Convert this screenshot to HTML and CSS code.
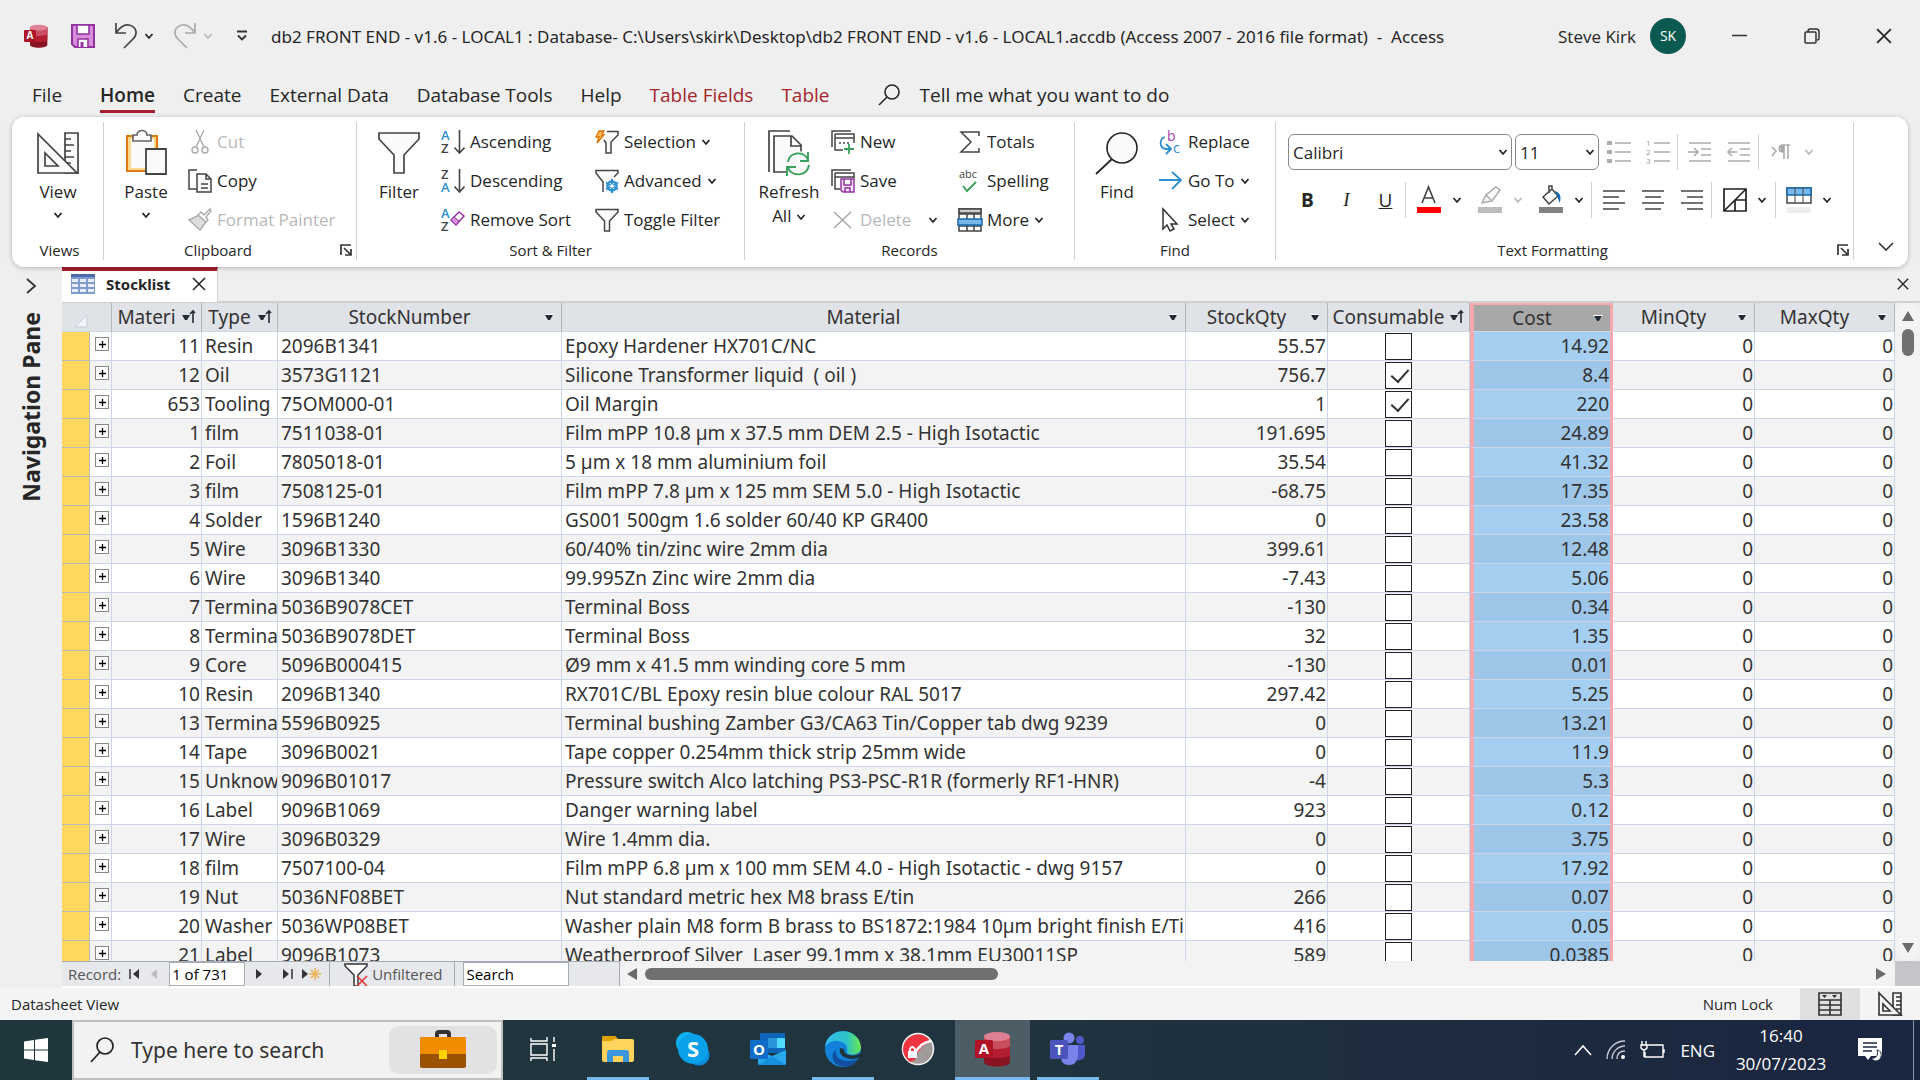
FILE: index.html
```html
<!DOCTYPE html>
<html lang="en">
<head>
  <meta charset="UTF-8" />
  <meta name="viewport" content="width=device-width, initial-scale=1.0" />
  <title>db2 FRONT END - Access</title>
  <link rel="stylesheet" href="styles.css">
</head>
<body>
  <!-- Shared icons -->
  <svg class="sprite" aria-hidden="true">
    <symbol id="chev" viewBox="0 0 10 10"><path d="M1.5 3 L5 7 L8.500 3" fill="none" stroke="currentColor" stroke-width="1.800"/></symbol>
    <symbol id="access" viewBox="0 0 36 36">
      <path d="M9 5 V31 C9 37 35 37 35 31 V5Z" fill="#881421"/>
      <path d="M9 5 V24 C12 28 32 28 35 24 V5Z" fill="#b31e30"/>
      <path d="M9 5 V15 C12 19 32 19 35 15 V5Z" fill="#c94f60"/>
      <ellipse cx="22" cy="5.500" rx="13" ry="4.500" fill="#e08095"/>
      <rect x="0" y="9" width="18" height="18" rx="1.500" fill="#b01226"/>
      <text x="9" y="23" text-anchor="middle" class="logo-letter">A</text>
    </symbol>
    <symbol id="az" viewBox="0 0 24 24">
      <path d="M18.500 0 V22 M13.500 17.500 L18.500 23 L23.500 17.500" fill="none" stroke="#444" stroke-width="1.600"/>
    </symbol>
    <symbol id="funnel" viewBox="0 0 24 24"><path d="M1 1.500 H23 V4 L14.500 13 V23 H9.500 V13 L1 4Z" fill="#fafafa" stroke="#444" stroke-width="1.500"/></symbol>
    <symbol id="design" viewBox="0 0 42 42">
      <path d="M28 1 H41 V41 H28Z M28 7 H34 M28 13 H37 M28 19 H34 M28 25 H37 M28 31 H34" fill="#fafafa" stroke="#444" stroke-width="1.700"/>
      <path d="M1 2 V41 H40Z M8 21 V34 H21Z" fill="#fafafa" stroke="#444" stroke-width="1.700"/>
    </symbol>
    <symbol id="launcher" viewBox="0 0 12 12"><path d="M1 11 V1 H11 M4 4 L10 10 M11 5 V11 H5" fill="none" stroke="#333" stroke-width="1.700"/></symbol>
    <symbol id="cross" viewBox="0 0 14 14"><path d="M1 1 L13 13 M13 1 L1 13" fill="none" stroke="currentColor" stroke-width="1.600"/></symbol>
    <symbol id="lens" viewBox="0 0 44 44"><circle cx="27" cy="17" r="15" fill="#fafafa" stroke="currentColor" stroke-width="1.600"/><path d="M17 28 L1 43" stroke="currentColor" stroke-width="1.800"/></symbol>
    <symbol id="lens-small" viewBox="0 0 22 22"><circle cx="14" cy="8" r="7" fill="none" stroke="currentColor" stroke-width="1.600"/><path d="M9 13 L1 21" stroke="currentColor" stroke-width="1.600"/></symbol>
  </svg>

  <header class="titlebar">
    <div class="quick">
      <svg width="24" height="24"><use href="#access"/></svg>
      <button aria-label="Save"><svg width="24" height="24" viewBox="0 0 24 24"><path d="M1 1 H23 V23 H4 L1 20Z" fill="#d88fdb" stroke="#9332a0" stroke-width="2"/><path d="M6 1 H18 V10 H6Z M7 23 V15 H17 V23" fill="#fff" stroke="#9332a0" stroke-width="1.600"/><path d="M11 18 V23" stroke="#9332a0" stroke-width="3"/></svg></button>
      <div class="split">
        <button aria-label="Undo"><svg width="24" height="26" viewBox="0 0 24 26"><path d="M2 0 V10 H12 M2 10 C6 4 10 1 15 2 C23 4 24 11 19 16 L10 25" fill="none" stroke="#444" stroke-width="1.700"/></svg></button>
        <svg class="chev"><use href="#chev"/></svg>
      </div>
      <div class="split off">
        <button aria-label="Redo"><svg width="24" height="26" viewBox="0 0 24 26"><path d="M22 0 V10 H12 M22 10 C18 4 14 1 9 2 C1 4 0 11 5 16 L14 25" fill="none" stroke="#aaa" stroke-width="1.700"/></svg></button>
        <svg class="chev"><use href="#chev"/></svg>
      </div>
      <button class="more" aria-label="Customize toolbar"><svg width="12" height="12" viewBox="0 0 12 12"><path d="M1 1.500 H11 M2 5.500 L6 9.500 L10 5.500" fill="none" stroke="#333" stroke-width="1.800"/></svg></button>
    </div>
    <h1>db2 FRONT END - v1.6 - LOCAL1 : Database- C:\Users\skirk\Desktop\db2 FRONT END - v1.6 - LOCAL1.accdb (Access 2007 - 2016 file format)&nbsp; -&nbsp; Access</h1>
    <div class="account"><span>Steve Kirk</span><span class="avatar">SK</span></div>
    <div class="winbtns">
      <button aria-label="Minimize"><svg width="16" height="16" viewBox="0 0 16 16"><path d="M0 7.500 H15" stroke="#333" stroke-width="1.500"/></svg></button>
      <button aria-label="Restore"><svg width="16" height="16" viewBox="0 0 16 16"><path d="M1 5 Q1 4 2 4 H11 Q12 4 12 5 V14 Q12 15 11 15 H2 Q1 15 1 14Z M4 3.500 Q4 1 6 1 H12 Q15 1 15 4 V10 Q15 12 13 12" fill="none" stroke="#333" stroke-width="1.500"/></svg></button>
      <button aria-label="Close"><svg width="16" height="16"><use href="#cross"/></svg></button>
    </div>
  </header>

  <nav class="tabs">
    <a href="#file">File</a>
    <a href="#home" class="active">Home</a>
    <a href="#create">Create</a>
    <a href="#external">External Data</a>
    <a href="#tools">Database Tools</a>
    <a href="#help">Help</a>
    <a href="#fields" class="context">Table Fields</a>
    <a href="#table" class="context">Table</a>
    <button class="tellme"><svg width="22" height="22"><use href="#lens-small"/></svg>Tell me what you want to do</button>
  </nav>

  <section class="ribbon">
    <div class="group g-views">
      <div class="tools">
        <button class="big"><svg width="42" height="42"><use href="#design"/></svg><span>View</span><svg class="chev"><use href="#chev"/></svg></button>
      </div>
      <div class="caption">Views</div>
    </div>

    <div class="group g-clip">
      <div class="tools">
        <button class="big"><svg width="42" height="46" viewBox="0 0 42 46"><path d="M2 6 H32 V41 H2Z" fill="#fbd98c" stroke="#e07a10" stroke-width="2"/><path d="M6 9 H29 V38 H6Z" fill="#fafafa"/><path d="M8 11 V5 H12 C12 -1 22 -1 22 5 H26 V11Z" fill="#fafafa" stroke="#666" stroke-width="1.700"/><path d="M21 19 H41 V44 H21Z" fill="#fafafa" stroke="#444" stroke-width="1.800"/></svg><span>Paste</span><svg class="chev"><use href="#chev"/></svg></button>
        <div class="stack">
          <button class="off"><svg width="24" height="24" viewBox="0 0 24 24"><path d="M8 0 L16 17 M16 0 L8 17" stroke="#aaa" stroke-width="1.400"/><circle cx="7" cy="20" r="3" fill="none" stroke="#aaa" stroke-width="1.400"/><circle cx="17" cy="20" r="3" fill="none" stroke="#aaa" stroke-width="1.400"/></svg>Cut</button>
          <button><svg width="24" height="24" viewBox="0 0 24 24"><path d="M9 1 H1 V20 H9" fill="none" stroke="#444" stroke-width="1.500"/><path d="M9 5 H18 L23 10 V23 H9Z M18 5 V10 H23 M13 15 H20 M13 19 H20" fill="#fafafa" stroke="#444" stroke-width="1.500"/></svg>Copy</button>
          <button class="off"><svg width="24" height="24" viewBox="0 0 24 24"><path d="M1 12 L11 7 L18 14 L12 22Z" fill="#ddd" stroke="#aaa" stroke-width="1.400"/><path d="M10 7 L13 4 L16 7 L22 1 L23 3 L18 9 L20 12 L18 14Z" fill="#fafafa" stroke="#aaa" stroke-width="1.400"/></svg>Format Painter</button>
        </div>
      </div>
      <div class="caption with-launch">Clipboard<button class="launch" aria-label="Clipboard options"><svg width="12" height="12"><use href="#launcher"/></svg></button></div>
    </div>

    <div class="group g-sort">
      <div class="tools">
        <button class="big"><svg width="42" height="42" viewBox="0 0 42 42"><path d="M1 1 H41 V7 L26 23 V41 H16 V23 L1 7Z" fill="#fafafa" stroke="#444" stroke-width="1.700"/></svg><span>Filter</span></button>
        <div class="stack">
          <button><svg width="24" height="24" class="azicon"><use href="#az"/><text x="0" y="10" class="blue">A</text><text x="0" y="23">Z</text></svg>Ascending</button>
          <button><svg width="24" height="24" class="azicon"><use href="#az"/><text x="0" y="10">Z</text><text x="0" y="23" class="blue">A</text></svg>Descending</button>
          <button><svg width="24" height="24" class="azicon" viewBox="0 0 24 24"><text x="0" y="10" class="blue">A</text><text x="0" y="23">Z</text><path d="M10 12 L18 4 L23 8 L15 17Z" fill="#fafafa" stroke="#9332a0" stroke-width="1.500"/><path d="M10 12 L13 9 L18 13 L15 17Z" fill="#d88fdb" stroke="#9332a0"/></svg>Remove Sort</button>
        </div>
        <div class="stack">
          <button><svg width="24" height="24" viewBox="0 0 24 24"><path d="M12 1.500 H23 V5 L16 12 V23 H11 V13 L9 10" fill="#fafafa" stroke="#444" stroke-width="1.500"/><path d="M4 1 H9 L7 5 H9 L2 13 L4 7 H1Z" fill="#fbb95b" stroke="#e07000" stroke-width="1.300"/></svg>Selection<svg class="chev"><use href="#chev"/></svg></button>
          <button><svg width="24" height="24" viewBox="0 0 24 24"><path d="M8 23 V13 L1 4 V1.500 H23 V4 L19 8" fill="#fafafa" stroke="#444" stroke-width="1.500"/><circle cx="17" cy="17" r="4.500" fill="#fff" stroke="#2b8fd0" stroke-width="2.500"/><path d="M17 10 V24 M11 13.500 L23 20.500 M11 20.500 L23 13.500" stroke="#2b8fd0" stroke-width="2"/><circle cx="17" cy="17" r="1.800" fill="#fff"/></svg>Advanced<svg class="chev"><use href="#chev"/></svg></button>
          <button><svg width="24" height="24"><use href="#funnel"/></svg>Toggle Filter</button>
        </div>
      </div>
      <div class="caption">Sort &amp; Filter</div>
    </div>

    <div class="group g-rec">
      <div class="tools">
        <button class="big"><svg width="42" height="46" viewBox="0 0 42 46"><path d="M22 1 H1 V42" fill="none" stroke="#444" stroke-width="1.700"/><path d="M6 6 H24 L33 15 V42 H6Z M23 6 V16 H33" fill="#fafafa" stroke="#444" stroke-width="1.700"/><circle cx="30" cy="34" r="13" fill="#fafafa"/><path d="M20 32 C21 22 36 20 40 30 M40 22 V31 H32 M41 35 C39 47 24 47 20 38 M19 46 V37 H28" fill="none" stroke="#39a15a" stroke-width="1.900"/></svg><span>Refresh</span><span>All <svg class="chev"><use href="#chev"/></svg></span></button>
        <div class="stack">
          <button><svg width="24" height="24" viewBox="0 0 24 24"><path d="M1 17 V1 H20 M4 4 H23 V13 M4 4 V20 H12 M4 8 H23 M8 13 H10 M12 13 H14 M16 13 H18" fill="none" stroke="#444" stroke-width="1.500"/><path d="M18 14 V24 M13 19 H23" stroke="#39a15a" stroke-width="1.800"/></svg>New</button>
          <button><svg width="24" height="24" viewBox="0 0 24 24"><path d="M1 17 V1 H20 M4 4 H23 V9 M4 4 V20 H9 M4 8 H23" fill="none" stroke="#444" stroke-width="1.500"/><path d="M10 10 H23 V23 H12 L10 21Z M13 10 V16 H20 V10 M14 23 V19 H19 V23" fill="#f6e6f7" stroke="#9332a0" stroke-width="1.500"/></svg>Save</button>
          <button class="off wide"><svg width="24" height="24" viewBox="0 0 24 24"><path d="M3 4 L20 20 M20 4 L3 20" stroke="#aaa" stroke-width="1.600"/></svg>Delete<svg class="chev dark"><use href="#chev"/></svg></button>
        </div>
        <div class="stack">
          <button><svg width="24" height="24" viewBox="0 0 24 24"><path d="M21 6 V2 H3 L13 12 L3 22 H21 V18" fill="none" stroke="#444" stroke-width="1.500"/></svg>Totals</button>
          <button><svg width="24" height="24" viewBox="0 0 24 24"><text x="1" y="9" class="abc">abc</text><path d="M5 17 L9 22 L18 13" fill="none" stroke="#39a15a" stroke-width="1.900"/></svg>Spelling</button>
          <button><svg width="24" height="24" viewBox="0 0 24 24"><path d="M1 1 H23 V23 H1Z M1 6 H23 M9 6 V23 M16 6 V23 M1 18 H23" fill="#fff" stroke="#444" stroke-width="1.500"/><path d="M1 1 H23 V5 H1Z" fill="#ccc" stroke="#444" stroke-width="1.500"/><path d="M0 11 H24 V17 H0Z" fill="#79b8ea" stroke="#1668b0" stroke-width="1.500"/></svg>More<svg class="chev"><use href="#chev"/></svg></button>
        </div>
      </div>
      <div class="caption">Records</div>
    </div>

    <div class="group g-find">
      <div class="tools">
        <button class="big"><svg width="44" height="44"><use href="#lens"/></svg><span>Find</span></button>
        <div class="stack">
          <button><svg width="24" height="24" viewBox="0 0 24 24"><text x="8" y="11" class="rep-b">b</text><text x="14" y="23" class="rep-c">c</text><path d="M6 7 C0 9 0 18 7 19 H11 M7 14 L12 19 L7 24" fill="none" stroke="#2b8fd0" stroke-width="1.800"/></svg>Replace</button>
          <button><svg width="24" height="24" viewBox="0 0 24 24"><path d="M0 11 H22 M13 3 L22 11 L13 20" fill="none" stroke="#2b8fd0" stroke-width="1.800"/></svg>Go To<svg class="chev"><use href="#chev"/></svg></button>
          <button><svg width="24" height="24" viewBox="0 0 24 24"><path d="M4 1 V21 L8 17 L11 23 L15 21 L12 16 H18Z" fill="#fff" stroke="#333" stroke-width="1.500"/></svg>Select<svg class="chev"><use href="#chev"/></svg></button>
        </div>
      </div>
      <div class="caption">Find</div>
    </div>

    <div class="group g-text">
      <div class="tools format">
        <div class="line">
          <label class="pick font"><select aria-label="Font"><option>Calibri</option></select><svg class="chev"><use href="#chev"/></svg></label>
          <label class="pick size"><select aria-label="Font size"><option>11</option></select><svg class="chev"><use href="#chev"/></svg></label>
          <button aria-label="Bullets"><svg width="24" height="24" viewBox="0 0 24 24"><path d="M8 3 H24 M8 12 H24 M8 21 H24" stroke="#aaa" stroke-width="1.600"/><path d="M0 3 H5 M0 12 H5 M0 21 H5" stroke="#aaa" stroke-width="4"/></svg></button>
          <button aria-label="Numbering"><svg width="24" height="24" viewBox="0 0 24 24" class="nums"><path d="M8 3 H24 M8 12 H24 M8 21 H24" stroke="#aaa" stroke-width="1.600"/><text x="0" y="6">1</text><text x="0" y="15">2</text><text x="0" y="24">3</text></svg></button>
          <i class="sep"></i>
          <button aria-label="Increase indent"><svg width="24" height="24" viewBox="0 0 24 24"><path d="M1 3 H23 M13 9 H23 M13 15 H23 M1 21 H23 M0 12 H9 M6 8 L10 12 L6 16" fill="none" stroke="#aaa" stroke-width="1.600"/></svg></button>
          <button aria-label="Decrease indent"><svg width="24" height="24" viewBox="0 0 24 24"><path d="M1 3 H23 M13 9 H23 M13 15 H23 M1 21 H23 M2 12 H10 M5 8 L1 12 L5 16" fill="none" stroke="#aaa" stroke-width="1.600"/></svg></button>
          <i class="sep"></i>
          <button class="dd off" aria-label="Text direction"><svg width="24" height="24" viewBox="0 0 24 24"><path d="M2 7 L6 11 L2 16 M20 5 H13 C8 5 8 12 13 12 M14 5 V19 M18 5 V19" fill="none" stroke="#aaa" stroke-width="1.600"/><path d="M10 6 H14 V12 H11Z" fill="#aaa"/></svg><svg class="chev"><use href="#chev"/></svg></button>
        </div>
        <div class="line">
          <button class="letter"><b>B</b></button>
          <button class="letter"><em>I</em></button>
          <button class="letter"><u>U</u></button>
          <i class="sep"></i>
          <button class="dd" aria-label="Font colour"><svg width="26" height="26" viewBox="0 0 26 26"><path d="M6 16 L12.500 0 L19 16 M8 11 H17" fill="none" stroke="#444" stroke-width="1.600"/><rect x="1" y="20" width="24" height="6" fill="#f00"/></svg><svg class="chev"><use href="#chev"/></svg></button>
          <button class="dd off" aria-label="Highlight"><svg width="26" height="26" viewBox="0 0 26 26"><path d="M5 16 L9 8 L19 0 L23 3 L15 14 L9 15Z M9 8 L14 13" fill="#fafafa" stroke="#aaa" stroke-width="1.500"/><rect x="1" y="20" width="24" height="6" fill="#bdbdbd"/></svg><svg class="chev"><use href="#chev"/></svg></button>
          <button class="dd" aria-label="Background"><svg width="26" height="26" viewBox="0 0 26 26"><path d="M5 10 L14 2 L20 9 L11 17Z M14 2 V-1 H11 V6" fill="#fafafa" stroke="#444" stroke-width="1.500"/><path d="M17 4 C23 6 23 10 22 16 C20 13 20 9 17 4Z" fill="#1668b0"/><rect x="1" y="20" width="24" height="6" fill="#808080"/></svg><svg class="chev"><use href="#chev"/></svg></button>
          <i class="sep"></i>
          <button aria-label="Align left"><svg width="24" height="24" viewBox="0 0 24 24"><path d="M1 3 H23 M1 9 H17 M1 15 H23 M1 21 H17" stroke="#444" stroke-width="1.700"/></svg></button>
          <button aria-label="Centre"><svg width="24" height="24" viewBox="0 0 24 24"><path d="M1 3 H23 M4 9 H20 M1 15 H23 M4 21 H20" stroke="#444" stroke-width="1.700"/></svg></button>
          <button aria-label="Align right"><svg width="24" height="24" viewBox="0 0 24 24"><path d="M1 3 H23 M7 9 H23 M1 15 H23 M7 21 H23" stroke="#444" stroke-width="1.700"/></svg></button>
          <i class="sep"></i>
          <button class="dd" aria-label="Gridlines"><svg width="24" height="24" viewBox="0 0 24 24"><path d="M1 1 H23 V23 H1Z M1 23 L23 1 M12 12 H23 M12 12 V23" fill="none" stroke="#222" stroke-width="1.700"/></svg><svg class="chev"><use href="#chev"/></svg></button>
          <i class="sep"></i>
          <button class="dd" aria-label="Alternate row colour"><svg width="26" height="26" viewBox="0 0 26 26"><path d="M1 1 H25 V16 H1Z" fill="#fff" stroke="#444" stroke-width="1.500"/><path d="M1 1 H25 V8 H1Z" fill="#79b8ea" stroke="#1668b0" stroke-width="1.500"/><path d="M9 1 V16 M17 1 V16" stroke="#444"/><rect x="1" y="20" width="24" height="6" fill="#eee"/></svg><svg class="chev"><use href="#chev"/></svg></button>
        </div>
      </div>
      <div class="caption with-launch">Text Formatting<button class="launch" aria-label="Text options"><svg width="12" height="12"><use href="#launcher"/></svg></button></div>
    </div>
    <button class="collapse" aria-label="Collapse ribbon"><svg width="16" height="10" viewBox="0 0 16 10"><path d="M1 1 L8 8 L15 1" fill="none" stroke="#333" stroke-width="1.600"/></svg></button>
  </section>

  <main class="workspace">
    <aside class="navpane">
      <button aria-label="Open pane"><svg width="10" height="16" viewBox="0 0 10 16"><path d="M1 1 L9 8 L1 15" fill="none" stroke="#333" stroke-width="1.800"/></svg></button>
      <span>Navigation Pane</span>
    </aside>
    <div class="document">
      <div class="objecttabs">
        <div class="objecttab">
          <svg width="24" height="20" viewBox="0 0 24 20"><rect width="24" height="20" fill="#7f9bd0"/><path d="M1 5 H7 V8 H1Z M9 5 H15 V8 H9Z M17 5 H23 V8 H17Z M1 10 H7 V13 H1Z M9 10 H15 V13 H9Z M17 10 H23 V13 H17Z M1 15 H7 V18 H1Z M9 15 H15 V18 H9Z M17 15 H23 V18 H17Z" fill="#e8eefa"/><rect width="24" height="3" fill="#4a6aa8"/></svg>
          <span>Stocklist</span>
          <button aria-label="Close Stocklist"><svg width="14" height="14"><use href="#cross"/></svg></button>
        </div>
        <button class="closeall" aria-label="Close"><svg width="12" height="12"><use href="#cross"/></svg></button>
      </div>
      <div class="sheet">
        <div class="grid">
          <table>
            <colgroup>
              <col class="c-sel"><col class="c-exp"><col class="c-id"><col class="c-type"><col class="c-num"><col>
              <col class="c-qty"><col class="c-qty"><col class="c-cost"><col class="c-qty"><col class="c-max">
            </colgroup>
            <thead><tr id="headRow"></tr></thead>
            <tbody id="rows"></tbody>
          </table>
        </div>
        <div class="vscroll">
          <svg width="14" height="12" viewBox="0 0 14 12"><path d="M7 1 L13 11 H1Z" fill="#6b6b6b"/></svg>
          <div class="thumb"></div>
          <svg width="14" height="12" viewBox="0 0 14 12"><path d="M7 11 L13 1 H1Z" fill="#6b6b6b"/></svg>
        </div>
      </div>
      <div class="recordbar">
        <div class="recnav">
          <label for="recno">Record:</label>
          <button aria-label="First"><svg width="12" height="12" viewBox="0 0 12 12"><path d="M1 1 V11" stroke="#333" stroke-width="1.500"/><path d="M10 1 V11 L4 6Z" fill="#333"/></svg></button>
          <button aria-label="Previous"><svg width="12" height="12" viewBox="0 0 12 12"><path d="M8 1 V11 L2 6Z" fill="#bbb"/></svg></button>
          <input id="recno" type="text" value="1 of 731">
          <button aria-label="Next"><svg width="12" height="12" viewBox="0 0 12 12"><path d="M3 1 V11 L9 6Z" fill="#333"/></svg></button>
          <button class="last" aria-label="Last"><svg width="12" height="12" viewBox="0 0 12 12"><path d="M11 1 V11" stroke="#333" stroke-width="1.500"/><path d="M2 1 V11 L8 6Z" fill="#333"/></svg></button>
          <button aria-label="New record"><svg width="20" height="14" viewBox="0 0 20 14"><path d="M1 2 V12 L7 7Z" fill="#333"/><path d="M14 1 V13 M8 7 H20 M10 3 L18 11 M18 3 L10 11" stroke="#e8b45c" stroke-width="1.600"/></svg></button>
          <i class="sep"></i>
          <button class="unfiltered"><svg width="24" height="24" viewBox="0 0 24 24"><path d="M1 2 H23 V4 L14 13 V24 H10 V13 L1 4Z" fill="#fff" stroke="#333" stroke-width="1.500"/><path d="M13 14 L23 24 M23 14 L13 24" stroke="#e23b3b" stroke-width="1.700"/></svg>Unfiltered</button>
          <i class="sep"></i>
          <input class="find" type="text" value="Search" aria-label="Search">
        </div>
        <div class="hscroll">
          <svg width="12" height="14" viewBox="0 0 12 14"><path d="M1 7 L11 1 V13Z" fill="#6b6b6b"/></svg>
          <div class="thumb"></div>
          <svg width="12" height="14" viewBox="0 0 12 14"><path d="M11 7 L1 1 V13Z" fill="#6b6b6b"/></svg>
        </div>
        <div class="corner"></div>
      </div>
    </div>
  </main>

  <footer class="statusbar">
    <span>Datasheet View</span>
    <span class="numlock">Num Lock</span>
    <button class="on" aria-label="Datasheet view"><svg width="24" height="24" viewBox="0 0 24 24"><path d="M1 1 H23 V23 H1Z M1 8 H23 M1 13 H23 M1 18 H23 M12 8 V23" fill="none" stroke="#333" stroke-width="1.600"/><path d="M4 3 H9 L6.500 6Z M14 3 H19 L16.500 6Z" fill="#333"/></svg></button>
    <button aria-label="Design view"><svg width="24" height="24" viewBox="0 0 24 24"><path d="M15 1 H23 V23 H15Z M18 5 H23 M18 9 H23 M18 13 H23 M18 17 H23" fill="none" stroke="#333" stroke-width="1.600"/><path d="M1 1 V23 H23Z M5 12 V19 H12Z" fill="#f4f4f4" stroke="#333" stroke-width="1.600"/></svg></button>
  </footer>

  <footer class="taskbar">
    <button class="start" aria-label="Start"><svg width="24" height="24" viewBox="0 0 24 24"><path d="M0 3.500 L10 2 V11.500 H0Z M11 1.800 L24 0 V11.500 H11Z M0 12.500 H10 V22 L0 20.500Z M11 12.500 H24 V24 L11 22.200Z" fill="#fff"/></svg></button>
    <label class="search">
      <svg width="24" height="26" viewBox="0 0 24 26"><circle cx="15" cy="9" r="8" fill="none" stroke="#222" stroke-width="1.700"/><path d="M10 15 L1 25" stroke="#222" stroke-width="1.700"/></svg>
      <input type="text" placeholder="Type here to search">
      <span class="promo"><svg width="46" height="38" viewBox="0 0 46 38"><path d="M17 7 V3 Q17 1 19 1 H27 Q29 1 29 3 V7" fill="none" stroke="#333" stroke-width="4"/><rect x="0" y="6" width="46" height="31" rx="2" fill="#9a5200"/><path d="M0 8 Q0 6 2 6 H44 Q46 6 46 8 V23 H0Z" fill="#f08c00"/><rect x="19" y="19" width="8" height="9" fill="#ffd400"/></svg></span>
    </label>
    <button aria-label="Task view"><svg width="26" height="26" viewBox="0 0 26 26"><path d="M1 8 H17 V19 H1Z M1 2 V5 H17 V1 M1 25 V22 H17 V25 M24 1 V6 M24 13 V25" fill="none" stroke="#fff" stroke-width="1.400"/><rect x="22" y="8" width="4" height="3" fill="#fff"/></svg></button>
    <button class="open" aria-label="File Explorer"><svg width="34" height="28" viewBox="0 0 34 28"><path d="M1 3 Q1 1 3 1 H14 L17 4 H31 Q33 4 33 6 V25 Q33 27 31 27 H3 Q1 27 1 25Z" fill="#ffd35c"/><path d="M1 3 Q1 1 3 1 H14 L17 4 H13 Q12 6 9 6 H1Z" fill="#e0a000"/><path d="M6 27 V18 Q6 15 9 15 H25 Q28 15 28 18 V27 H22 V21 H12 V27Z" fill="#3a96dd"/></svg></button>
    <button aria-label="Skype"><svg width="34" height="34" viewBox="0 0 34 34"><circle cx="11" cy="11" r="11" fill="#0fb1f1"/><circle cx="23" cy="23" r="10.500" fill="#0a8fe0"/><circle cx="17" cy="17" r="15" fill="#0aa1ea"/><text x="17" y="25" text-anchor="middle" class="skype">S</text></svg></button>
    <button aria-label="Outlook"><svg width="36" height="34" viewBox="0 0 36 34"><rect x="10" y="1" width="25" height="20" fill="#0f65b8"/><rect x="18" y="6" width="9" height="10" fill="#2a94dc"/><rect x="27" y="6" width="8" height="10" fill="#50d9ff"/><path d="M8 18 L22 24 L36 18 V32 Q36 33 34 33 H10 Q8 33 8 31Z" fill="#28a8ea"/><path d="M8 33 L22 24 L36 33Z" fill="#1490df"/><rect x="0" y="8" width="18" height="19" rx="1.500" fill="#0f6cc8"/><text x="9" y="23" text-anchor="middle" class="logo-letter">O</text></svg></button>
    <button class="open" aria-label="Edge"><svg width="36" height="36" viewBox="0 0 36 36"><defs><linearGradient id="eg"><stop offset="0" stop-color="#38b8ee"/><stop offset=".6" stop-color="#2cc3c8"/><stop offset="1" stop-color="#6be84c"/></linearGradient></defs><circle cx="18" cy="18" r="18" fill="#1182d8"/><path d="M0 16 C2 -5 34 -5 36 16 C36 22 30 25 24 23 C20 21 24 18 21 14 C17 9 5 8 0 16Z" fill="url(#eg)"/><path d="M11 18 C9 28 18 33 33 28 C27 37 17 38 10 32 C5 26 8 19 15 16Z" fill="#1150a0"/><path d="M15 17 C13 25 22 30 33 27 L37 25 V21 C31 26 19 26 19 18Z" fill="#20343d"/></svg></button>
    <button aria-label="Screen lock"><svg width="34" height="34" viewBox="0 0 34 34"><circle cx="17" cy="17" r="15.500" fill="#a09a9a" stroke="#f2f2f2" stroke-width="1.500"/><path d="M2 17 A15 15 0 0 1 30 10 Q18 13 14 28 L9 30 Q2 24 2 17Z" fill="#f0343f"/><path d="M30 9 Q18 11 14 22" fill="none" stroke="#fff" stroke-width="2.500"/><path d="M9 19 V17 Q11 13 14 17 V19" fill="none" stroke="#fff" stroke-width="1.800"/><rect x="7" y="19" width="9" height="7" fill="#fff"/></svg></button>
    <button class="open current" aria-label="Access"><svg width="36" height="36"><use href="#access"/></svg></button>
    <button class="open" aria-label="Teams"><svg width="36" height="34" viewBox="0 0 36 34"><circle cx="30" cy="8" r="4" fill="#5059c9"/><path d="M25 13 H35 V23 Q34 29 27 28Z" fill="#5059c9"/><circle cx="19" cy="6" r="5.500" fill="#7b83eb"/><path d="M11 13 H28 V24 Q27 33 19 33 Q11 33 11 25Z" fill="#7b83eb"/><rect x="0" y="8" width="18" height="19" rx="1.500" fill="#4b53bc"/><text x="9" y="23" text-anchor="middle" class="logo-letter">T</text></svg></button>
    <div class="tray">
      <svg width="18" height="12" viewBox="0 0 18 12"><path d="M1 11 L9 2 L17 11" fill="none" stroke="#fff" stroke-width="1.500"/></svg>
      <svg width="20" height="20" viewBox="0 0 20 20"><path d="M1 19 C1 9 9 1 19 1 M6 19 C6 12 12 6 19 6 M11 19 C11 14 14 11 19 11" fill="none" stroke="#c4cad0" stroke-width="1.400"/><circle cx="17" cy="17" r="2" fill="#fff"/></svg>
      <svg width="26" height="18" viewBox="0 0 26 18"><path d="M7 4 H23 V16 H5 V11 M24 8 V12 M2 0 V4 M6 0 V4 M1 4 H7 V7 Q4 11 1 7Z M4 9 V16" fill="none" stroke="#fff" stroke-width="1.400"/></svg>
      <span>ENG</span>
      <div class="clock"><span>16:40</span><span>30/07/2023</span></div>
      <svg width="26" height="26" viewBox="0 0 26 26"><path d="M1 1 H25 V19 H14 L11 23 L8 19 H1Z" fill="#fff"/><path d="M6 6 H20 M6 10 H20 M6 14 H15" stroke="#1c2a40" stroke-width="1.400"/><path d="M20 13 C22 19 18 22 14 21 C18 27 26 23 24 16 C23 14 22 13 20 13Z" fill="#fff" stroke="#1c2a40"/></svg>
      <i class="peek"></i>
    </div>
  </footer>

  <script>
    const headers = [
      ["Materi", true], ["Type", true], ["StockNumber"], ["Material"], ["StockQty"],
      ["Consumable", true], ["Cost"], ["MinQty"], ["MaxQty"]
    ];

    // id, type, stock number, material, qty, consumable, cost
    const stock = [
      [11, "Resin", "2096B1341", "Epoxy Hardener HX701C/NC", "55.57", 0, "14.92"],
      [12, "Oil", "3573G1121", "Silicone Transformer liquid  ( oil )", "756.7", 1, "8.4"],
      [653, "Tooling", "75OM000-01", "Oil Margin", "1", 1, "220"],
      [1, "film", "7511038-01", "Film mPP 10.8 µm x 37.5 mm DEM 2.5 - High Isotactic", "191.695", 0, "24.89"],
      [2, "Foil", "7805018-01", "5 µm x 18 mm aluminium foil", "35.54", 0, "41.32"],
      [3, "film", "7508125-01", "Film mPP 7.8 µm x 125 mm SEM 5.0 - High Isotactic", "-68.75", 0, "17.35"],
      [4, "Solder", "1596B1240", "GS001 500gm 1.6 solder 60/40 KP GR400", "0", 0, "23.58"],
      [5, "Wire", "3096B1330", "60/40% tin/zinc wire 2mm dia", "399.61", 0, "12.48"],
      [6, "Wire", "3096B1340", "99.995Zn Zinc wire 2mm dia", "-7.43", 0, "5.06"],
      [7, "Terminal", "5036B9078CET", "Terminal Boss", "-130", 0, "0.34"],
      [8, "Terminal", "5036B9078DET", "Terminal Boss", "32", 0, "1.35"],
      [9, "Core", "5096B000415", "Ø9 mm x 41.5 mm winding core 5 mm", "-130", 0, "0.01"],
      [10, "Resin", "2096B1340", "RX701C/BL Epoxy resin blue colour RAL 5017", "297.42", 0, "5.25"],
      [13, "Terminal", "5596B0925", "Terminal bushing Zamber G3/CA63 Tin/Copper tab dwg 9239", "0", 0, "13.21"],
      [14, "Tape", "3096B0021", "Tape copper 0.254mm thick strip 25mm wide", "0", 0, "11.9"],
      [15, "Unknown", "9096B01017", "Pressure switch Alco latching PS3-PSC-R1R (formerly RF1-HNR)", "-4", 0, "5.3"],
      [16, "Label", "9096B1069", "Danger warning label", "923", 0, "0.12"],
      [17, "Wire", "3096B0329", "Wire 1.4mm dia.", "0", 0, "3.75"],
      [18, "film", "7507100-04", "Film mPP 6.8 µm x 100 mm SEM 4.0 - High Isotactic - dwg 9157", "0", 0, "17.92"],
      [19, "Nut", "5036NF08BET", "Nut standard metric hex M8 brass E/tin", "266", 0, "0.07"],
      [20, "Washer", "5036WP08BET", "Washer plain M8 form B brass to BS1872:1984 10µm bright finish E/Tin", "416", 0, "0.05"],
      [21, "Label", "9096B1073", "Weatherproof Silver  Laser 99.1mm x 38.1mm EU30011SP", "589", 0, "0.0385"]
    ];

    const arrow = '<svg width="10" height="8" viewBox="0 0 10 8"><path d="M0 1 H10 L6 7 H4Z" fill="#fff"/><path d="M1 2 H9 L6 7 H4Z" fill="#222b35"/></svg>';
    const sorted = '<svg width="14" height="16" viewBox="0 0 14 16"><path d="M0 6 H8 L5 11 H3Z" fill="#222b35"/><path d="M11 2 V14 M8 5 L11 2 L13 4" fill="none" stroke="#222b35" stroke-width="1.600"/></svg>';

    document.getElementById("headRow").innerHTML =
      '<th colspan="2" class="corner-cell"><div><svg width="14" height="14" viewBox="0 0 14 14"><path d="M13 1 V13 H1Z" fill="#f4f6fa" stroke="#c3cede"/></svg></div></th>' +
      headers.map(([name, isSorted]) =>
        `<th class="${name === "Cost" ? "cost" : ""}"><div><span>${name}</span><button aria-label="Filter ${name}">${isSorted ? sorted : arrow}</button></div></th>`
      ).join("");

    document.getElementById("rows").innerHTML = stock.map(r => `<tr>
      <td class="sel"></td>
      <td class="exp"><button aria-label="Expand ${r[0]}"><svg width="13" height="13" viewBox="0 0 13 13"><path d="M3 6.500 H10 M6.500 3 V10" stroke="#000" stroke-width="1.300"/></svg></button></td>
      <td class="num">${r[0]}</td><td>${r[1]}</td><td>${r[2]}</td><td>${r[3]}</td>
      <td class="num">${r[4]}</td>
      <td class="tick"><input type="checkbox" aria-label="Consumable ${r[0]}"${r[5] ? " checked" : ""}></td>
      <td class="num cost">${r[6]}</td><td class="num">0</td><td class="num">0</td>
    </tr>`).join("");
  </script>
</body>
</html>
```

FILE: styles.css
```css
* {
  box-sizing: border-box;
}
body {
  margin: 0;
  height: 100vh;
  display: flex;
  flex-direction: column;
  overflow: hidden;
  background: #efefef;
  color: #262626;
  font-family: "Open Sans", "Noto Sans", sans-serif;
  font-size: 17px;
}
button {
  display: inline-flex;
  align-items: center;
  justify-content: center;
  padding: 0;
  border: 0;
  background: none;
  color: inherit;
  font: inherit;
}
svg {
  flex: none;
  overflow: visible;
}
.sprite {
  position: absolute;
  width: 0;
  height: 0;
}
.chev {
  width: 10px;
  height: 10px;
}
.logo-letter {
  fill: #fff;
  font-size: 15px;
  font-weight: bold;
}
.off {
  color: #b8b8b8;
}

/* Title bar */
.titlebar {
  display: flex;
  align-items: center;
  flex: none;
  height: 72px;
  padding-left: 24px;
}
.quick {
  display: flex;
  align-items: center;
  width: 247px;
  gap: 19px;
}
.quick button:first-of-type {
  margin-left: 4px;
}
.split {
  display: flex;
  align-items: center;
  gap: 6px;
}
.quick .split button {
  margin: 0;
}
.more {
  margin-left: 4px;
}
.titlebar h1 {
  flex: 1;
  margin: 0;
  font-family: "Noto Sans", sans-serif;
  font-size: 17px;
  font-weight: normal;
  white-space: nowrap;
}
.account {
  display: flex;
  align-items: center;
  gap: 14px;
  margin-right: 18px;
}
.avatar {
  width: 36px;
  height: 36px;
  border-radius: 50%;
  background: #0b5a50;
  color: #fff;
  font-size: 14px;
  line-height: 36px;
  text-align: center;
}
.winbtns {
  display: flex;
}
.winbtns button {
  width: 72px;
  height: 72px;
}

/* Ribbon tabs */
.tabs {
  display: flex;
  align-items: center;
  flex: none;
  height: 45px;
  padding-left: 32px;
  gap: 28px;
  font-size: 19px;
}
.tabs a {
  height: 36px;
  line-height: 36px;
  color: inherit;
  text-decoration: none;
  border-bottom: 3px solid transparent;
}
.tabs .active {
  margin-left: 10px;
  font-weight: 600;
  border-color: #a4202f;
}
.tabs .context {
  color: #a4262c;
}
.tellme {
  margin-left: 20px;
  gap: 20px;
}

/* Ribbon */
.ribbon {
  position: relative;
  display: flex;
  flex: none;
  height: 150px;
  margin: 0 12px;
  border-radius: 12px;
  background: #fff;
  box-shadow: 0 1px 5px rgba(0,0,0,0.25);
}
.group {
  display: flex;
  flex-direction: column;
  flex: none;
  margin: 5px 0 7px;
  border-right: 1px solid #d0d0d0;
}
.g-views { width: 92px; }
.g-clip { width: 253px; }
.g-sort { width: 388px; }
.g-rec { width: 330px; }
.g-find { width: 201px; }
.g-text { width: 578px; }
.tools {
  display: flex;
  height: 120px;
}
.g-views .tools, .g-views .caption {
  padding-left: 4px;
}
.g-rec .tools {
  padding-left: 2px;
}
.big {
  flex: none;
  flex-direction: column;
  justify-content: flex-start;
  width: 84px;
  padding-top: 8px;
  line-height: 24px;
}
.big > svg:first-child {
  height: 46px;
  margin-bottom: 4px;
}
.big > .chev {
  margin-top: 6px;
}
.stack {
  display: flex;
  flex-direction: column;
  flex: none;
}
.stack button {
  height: 39px;
  justify-content: flex-start;
  gap: 5px;
  white-space: nowrap;
}
.g-sort .stack {
  width: 154px;
}
.g-rec .stack {
  width: 127px;
}
.wide .chev {
  margin-left: 12px;
}
.dark {
  color: #262626;
}
.azicon text {
  font-size: 13px;
  font-weight: 600;
  fill: #444;
}
.azicon .blue {
  fill: #2b8fd0;
}
.abc {
  font-size: 11px;
  fill: #444;
}
.rep-b {
  font-size: 14px;
  fill: #a43fb0;
}
.rep-c {
  font-size: 14px;
  fill: #2b8fd0;
}
.nums text {
  font-size: 8px;
  fill: #999;
}
.caption {
  position: relative;
  font-size: 15px;
  line-height: 20px;
  text-align: center;
}
.with-launch {
  padding-right: 24px;
}
.launch {
  position: absolute;
  right: 4px;
  top: 4px;
}
.format {
  flex-direction: column;
  padding: 6px 0 0 12px;
}
.line {
  display: flex;
  align-items: center;
  height: 48px;
}
.line > button {
  width: 39px;
  height: 36px;
}
.line > .dd {
  width: 61px;
  gap: 10px;
}
.letter {
  font-size: 19px;
}
.letter em {
  font-family: "Liberation Serif", serif;
}
.sep {
  width: 1px;
  height: 36px;
  background: #d0d0d0;
}
.line .sep {
  margin-right: 2px;
}
.pick {
  position: relative;
  height: 36px;
  margin-right: 3px;
}
.pick select {
  width: 100%;
  height: 100%;
  padding: 0 4px;
  border: 1px solid #888;
  border-radius: 6px;
  background: #fff;
  appearance: none;
  color: #262626;
  font: inherit;
}
.pick .chev {
  position: absolute;
  right: 4px;
  top: 13px;
}
.font { width: 224px; }
.size {
  width: 84px;
  margin-right: 0;
}
.collapse {
  position: absolute;
  right: 14px;
  bottom: 15px;
}

/* Workspace */
.workspace {
  display: flex;
  flex: 1;
  min-height: 0;
}
.navpane {
  display: flex;
  flex-direction: column;
  align-items: center;
  flex: none;
  width: 62px;
  padding-top: 11px;
  gap: 18px;
}
.navpane span {
  writing-mode: vertical-rl;
  transform: rotate(180deg);
  font-family: "Noto Sans", sans-serif;
  font-size: 23px;
  font-weight: bold;
}
.document {
  display: flex;
  flex-direction: column;
  flex: 1;
  min-width: 0;
}
.objecttabs {
  display: flex;
  align-items: center;
  justify-content: space-between;
  flex: none;
  height: 36px;
  padding-right: 11px;
  border-bottom: 2px solid #d0d0d0;
}
.objecttab {
  display: flex;
  align-items: center;
  height: 36px;
  padding: 0 11px 5px 9px;
  border-top: 5px solid #a81f30;
  border-right: 1px solid #d0d0d0;
  background: #fff;
  font-family: "Noto Sans", sans-serif;
  font-size: 15px;
  font-weight: bold;
}
.objecttab span {
  margin: 0 22px 0 11px;
}
.sheet {
  display: flex;
  flex: 1;
  min-height: 0;
}
.grid {
  flex: 1;
  min-width: 0;
  overflow: hidden;
}
table {
  width: 100%;
  table-layout: fixed;
  border-collapse: separate;
  border-spacing: 0;
  font-family: "Noto Sans", sans-serif;
  font-size: 19px;
  line-height: 28px;
}
.c-sel { width: 28px; }
.c-exp { width: 22px; }
.c-id { width: 90px; }
.c-type { width: 76px; }
.c-num { width: 284px; }
.c-qty { width: 142px; }
.c-cost { width: 143px; }
.c-max { width: 140px; }
th {
  height: 29px;
  padding: 0;
  border-right: 1px solid #b4b8be;
  border-bottom: 1px solid #cdd6e4;
  background: #dfe2e7;
  color: #333;
  font-weight: normal;
}
th div {
  display: flex;
  align-items: center;
  height: 26px;
  line-height: 26px;
}
th span {
  flex: 1;
  overflow: hidden;
}
th button {
  flex: none;
  width: 20px;
  padding-right: 4px;
}
.corner-cell svg {
  margin: 8px 0 0 12px;
}
td {
  height: 29px;
  padding: 0 3px;
  overflow: hidden;
  border-right: 1px solid #cdd6e8;
  border-bottom: 1px solid #cdd6e8;
  background: #fff;
  color: #333;
  white-space: pre;
}
tbody tr:nth-child(even) td {
  background: #f3f3f3;
}
.num {
  padding: 0 1px;
  text-align: right;
}
tbody tr .sel, tbody tr:nth-child(even) .sel {
  background: #ffd75e;
  border-color: #b8b8b8;
}
.exp {
  padding: 5px 0 0 5px;
  line-height: 0;
  vertical-align: top;
}
.exp button {
  width: 14px;
  height: 14px;
  border: 1px solid #888;
  background: #fff;
}
.tick {
  padding: 0;
  line-height: 0;
  text-align: center;
}
.tick input {
  appearance: none;
  width: 27px;
  height: 27px;
  margin: 0;
  border: 1px solid #222;
  background: #fff;
  vertical-align: top;
}
.tick input:checked::after {
  content: "";
  display: block;
  width: 8px;
  height: 15px;
  margin: 2px 0 0 9px;
  border: solid #333;
  border-width: 0 2px 2px 0;
  transform: rotate(42deg);
}
.cost {
  border-left: 4px solid #f7a8ad;
  border-right: 3px solid #f7a8ad;
}
th.cost {
  border-top: 2px solid #f7a8ad;
  background: #a8a8a8;
}
td.cost {
  background: #a4cff1;
}
tbody tr:nth-child(even) .cost {
  background: #9dc6e9;
}
.vscroll {
  display: flex;
  flex-direction: column;
  align-items: center;
  flex: none;
  width: 25px;
  padding: 7px 0;
  gap: 7px;
  border-radius: 12px;
  background: #f3f3f3;
}
.vscroll .thumb {
  width: 12px;
  height: 27px;
  margin-bottom: auto;
  border-radius: 6px;
  background: #707070;
}

/* Record navigation */
.recordbar {
  display: flex;
  flex: none;
  height: 27px;
  border-bottom: 2px solid #fff;
}
.recnav {
  display: flex;
  align-items: center;
  flex: none;
  width: 558px;
  padding-left: 6px;
  overflow: hidden;
  border-top: 1px solid #a5acb5;
  border-right: 1px solid #a5acb5;
  background: #e6e8ec;
  color: #555;
  font-size: 15px;
}
.recnav button {
  height: 24px;
  margin-left: 8px;
}
.recnav input {
  width: 76px;
  height: 24px;
  margin-left: 8px;
  padding: 0 2px;
  border: 1px solid #a5acb5;
  background: #fff;
  color: #000;
  font: inherit;
}
.recnav .last {
  margin-left: 16px;
}
.recnav .sep {
  height: 26px;
  margin-left: 8px;
  background: #a5acb5;
}
.recnav .unfiltered {
  margin-left: 14px;
  margin-right: 4px;
  gap: 4px;
}
.recnav .find {
  width: 106px;
}
.hscroll {
  display: flex;
  align-items: center;
  flex: 1;
  padding: 0 8px 0 6px;
  gap: 7px;
  border-radius: 12px;
  background: #f3f3f3;
}
.hscroll .thumb {
  width: 28%;
  height: 12px;
  margin-right: auto;
  border-radius: 6px;
  background: #707070;
}
.corner {
  flex: none;
  width: 25px;
  background: #c3c5c9;
}

/* Status bar */
.statusbar {
  display: flex;
  align-items: center;
  flex: none;
  height: 32px;
  padding-left: 11px;
  background: #f4f4f4;
  font-size: 15px;
}
.numlock {
  margin-left: auto;
  margin-right: 27px;
}
.statusbar button {
  width: 60px;
  height: 32px;
}
.statusbar .on {
  background: #e0e0e0;
}

/* Taskbar */
.taskbar {
  display: flex;
  flex: none;
  height: 60px;
  background: linear-gradient(90deg, #20363d 0%, #20343f 50%, #1a2540 100%);
  color: #fff;
}
.taskbar > button {
  width: 75px;
  border-bottom: 3px solid transparent;
}
.taskbar .start {
  width: 72px;
  border: 0;
}
.taskbar .open {
  background: linear-gradient(#76b9ed, #76b9ed) bottom / 62px 3px no-repeat border-box;
}
.taskbar .current {
  background: #4d5d65;
  border-color: #76b9ed;
}
.search {
  display: flex;
  align-items: center;
  flex: none;
  width: 431px;
  margin-right: 2px;
  padding: 0 4px 0 16px;
  border: 2px solid #c0c0c0;
  background: #f2f2f2;
}
.search input {
  flex: 1;
  min-width: 0;
  padding: 0 0 0 17px;
  border: 0;
  background: none;
  font-family: "Noto Sans", sans-serif;
  font-size: 21px;
}
.search input::placeholder {
  color: #333;
}
.promo {
  display: flex;
  align-items: center;
  justify-content: center;
  width: 108px;
  height: 48px;
  border-radius: 10px;
  background: #e2e2e2;
}
.skype {
  fill: #fff;
  font-size: 22px;
  font-weight: bold;
}
.tray {
  display: flex;
  align-items: center;
  margin-left: auto;
  gap: 14px;
  padding-right: 6px;
}
.clock {
  display: flex;
  flex-direction: column;
  align-items: center;
  width: 104px;
  margin-right: 10px;
  line-height: 28px;
}
.peek {
  width: 1px;
  height: 60px;
  margin-left: 16px;
  background: #8a92a0;
}
```
